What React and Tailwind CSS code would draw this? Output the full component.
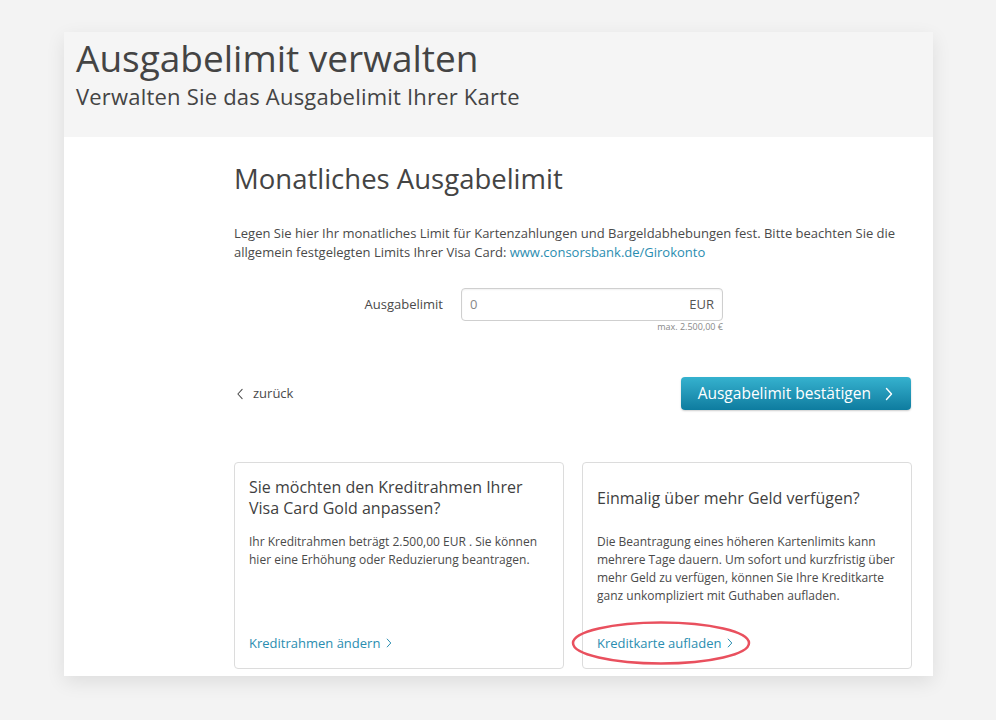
import React from "react";

const ChevronRight = ({ className = "" }) => (
  <svg viewBox="0 0 8 14" className={className} fill="none" stroke="currentColor" strokeWidth="1.4" strokeLinecap="round" strokeLinejoin="round">
    <path d="M1.5 1.5 L6.5 7 L1.5 12.5" />
  </svg>
);

const ChevronLeft = ({ className = "" }) => (
  <svg viewBox="0 0 8 14" className={className} fill="none" stroke="currentColor" strokeWidth="1.2" strokeLinecap="round" strokeLinejoin="round">
    <path d="M6.5 1.5 L1.5 7 L6.5 12.5" />
  </svg>
);

const InfoCard = ({ title, text, link, marked }) => (
  <div className="relative flex h-[207px] flex-1 flex-col rounded border border-[#dcdcdc] bg-white px-[14px]">
    <div className="flex h-[70px] items-center">
      <h3 className="text-[16px] leading-[21px] text-[#3f3f3f]">{title}</h3>
    </div>
    <p className="text-[12px] leading-[18px] text-[#4a4a4a]">{text}</p>
    <div className="mt-auto mb-[15px] flex items-center gap-[6px] text-[13px] text-[#2a8db0]">
      <span>{link}</span>
      <ChevronRight className="h-[10px] w-[6px]" />
    </div>
    {marked && (
      <svg className="pointer-events-none absolute left-[-12px] top-[158px] h-[44px] w-[180px]" viewBox="0 0 180 44" fill="none">
        <ellipse cx="90" cy="22" rx="88" ry="20.5" stroke="#e9505e" strokeWidth="2.5" />
      </svg>
    )}
  </div>
);

export default function App() {
  return (
    <div className="min-h-[720px] bg-[#f3f3f3] pt-[32px] pl-[64px]" style={{ fontFamily: "'Open Sans', Lato, sans-serif" }}>
      <div className="w-[869px] bg-white shadow-[0_6px_18px_rgba(0,0,0,0.09)]">
        {/* Header */}
        <div className="h-[105px] bg-[#f5f5f5] pl-[12px] pt-[4px]">
          <h1 className="text-[37px] leading-[44px] text-[#444]">Ausgabelimit verwalten</h1>
          <p className="mt-[3px] text-[22px] leading-[26px] tracking-[0.2px] text-[#444]">Verwalten Sie das Ausgabelimit Ihrer Karte</p>
        </div>

        {/* Content */}
        <div className="pl-[170px] pr-[21px] pt-[24px] pb-[7px]">
          <h2 className="text-[27.5px] leading-[36px] text-[#444]">Monatliches Ausgabelimit</h2>
          <p className="mt-[27px] text-[13px] leading-[19px] text-[#4a4a4a]">
            Legen Sie hier Ihr monatliches Limit für Kartenzahlungen und Bargeldabhebungen fest. Bitte beachten Sie die allgemein festgelegten Limits Ihrer Visa Card:{" "}
            <span className="text-[#2a8db0]">www.consorsbank.de/Girokonto</span>
          </p>

          <div className="mt-[26px] flex items-start">
            <label className="w-[209px] pt-[7px] text-right text-[13px] text-[#4a4a4a]">Ausgabelimit</label>
            <div className="ml-[18px] w-[262px]">
              <div className="flex h-[33px] items-center justify-between rounded border border-[#cfcfcf] px-[8px] text-[13px] shadow-[inset_0_1px_2px_rgba(0,0,0,0.06)]">
                <span className="text-[#888]">0</span>
                <span className="text-[#555]">EUR</span>
              </div>
              <div className="text-right text-[9px] leading-[12px] text-[#888]">max. 2.500,00 €</div>
            </div>
          </div>

          <div className="mt-[44px] flex items-center justify-between">
            <div className="flex items-center gap-[9px] pl-[2px] text-[13px] text-[#4a4a4a]">
              <ChevronLeft className="h-[12px] w-[8px]" />
              <span>zurück</span>
            </div>
            <button className="mr-[1px] flex h-[33px] items-center gap-[14px] rounded bg-gradient-to-b from-[#35b2cf] to-[#0d7c9f] pl-[17px] pr-[18px] text-[15.5px] text-white shadow-[0_1px_2px_rgba(0,0,0,0.2)]">
              <span>Ausgabelimit bestätigen</span>
              <ChevronRight className="h-[14px] w-[8px]" />
            </button>
          </div>

          <div className="mt-[52px] flex gap-[18px]">
            <InfoCard
              title="Sie möchten den Kreditrahmen Ihrer Visa Card Gold anpassen?"
              text="Ihr Kreditrahmen beträgt 2.500,00 EUR . Sie können hier eine Erhöhung oder Reduzierung beantragen."
              link="Kreditrahmen ändern"
            />
            <InfoCard
              title="Einmalig über mehr Geld verfügen?"
              text="Die Beantragung eines höheren Kartenlimits kann mehrere Tage dauern. Um sofort und kurzfristig über mehr Geld zu verfügen, können Sie Ihre Kreditkarte ganz unkompliziert mit Guthaben aufladen."
              link="Kreditkarte aufladen"
              marked
            />
          </div>
        </div>
      </div>
    </div>
  );
}
